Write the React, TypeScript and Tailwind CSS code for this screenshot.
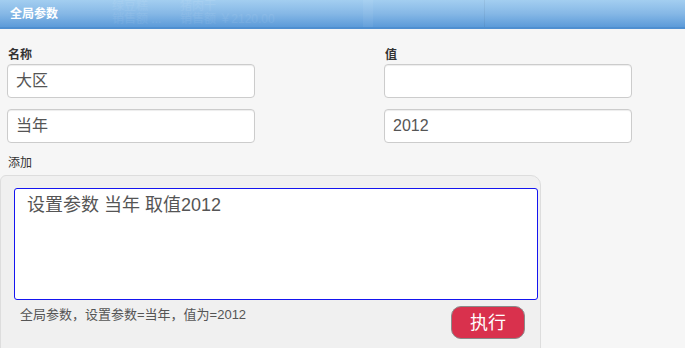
import React from "react";

// ── Field: label + input ─────────────────────────────────────────

function Field({ value }: { value: string }) {
  return (
    <div className="h-[34px] w-[248px] rounded-[4px] border border-[#cccccc] bg-white px-[8px] flex items-center shadow-[inset_0_1px_1px_rgba(0,0,0,0.075)]">
      <span className="text-[16px] text-[#555555] leading-none">{value}</span>
    </div>
  );
}

function Column({ label, values }: { label: string; values: string[] }) {
  return (
    <div className="flex flex-col">
      <div className="h-[17px] text-[12px] font-bold text-[#333333] leading-[17px] pl-[1px]">{label}</div>
      <div className="flex flex-col gap-[11px]">
        {values.map((v, i) => (
          <Field key={i} value={v} />
        ))}
      </div>
    </div>
  );
}

export default function App() {
  return (
    <div
      className="w-[685px] h-[348px] overflow-hidden bg-[#f6f6f6]"
      style={{ fontFamily: '"Liberation Sans", "Noto Sans CJK SC", sans-serif' }}
    >
      {/* ── Header bar ── */}
      <div className="relative h-[29px] border-b-2 border-[#4f8fd0] bg-gradient-to-b from-[#a3cef0] via-[#86b8e6] to-[#5c9bd9] flex items-center px-[10px]">
        {/* faint ghost content behind header */}
        <div className="absolute inset-y-0 left-[363px] w-[10px] bg-white/5" />
        <div className="absolute inset-y-0 left-[484px] w-px bg-black/5" />
        <div className="absolute left-[112px] top-0 w-[62px] overflow-hidden whitespace-nowrap text-[12px] leading-[13px] text-white/[0.07]">
          <div>绿豆糕</div>
          <div>销售额 ...</div>
        </div>
        <div className="absolute left-[180px] top-0 whitespace-nowrap text-[12px] leading-[13px] text-white/[0.07]">
          <div>猪肉干</div>
          <div>销售额 ￥2120.00</div>
        </div>
        <span className="relative text-[12px] font-bold text-white leading-none">全局参数</span>
      </div>

      {/* ── Parameter grid ── */}
      <div className="flex gap-[129px] pl-[7px] pt-[18px]">
        <Column label="名称" values={["大区", "当年"]} />
        <Column label="值" values={["", "2012"]} />
      </div>

      {/* ── Add section ── */}
      <div className="pl-[8px] pt-[12px] pb-[3px] text-[12px] text-[#333333] leading-[17px]">添加</div>

      <div className="w-[541px] h-[180px] rounded-tr-[10px] rounded-tl-[6px] border border-[#dddddd] bg-[#f0f0f0] pt-[12px] pl-[13px] pr-[2px]">
        <div className="h-[112px] w-[524px] rounded-[3px] border border-[#1515f0] bg-white px-[12px] pt-[5px]">
          <span className="text-[18px] text-[#555555] leading-[22px]">设置参数 当年 取值2012</span>
        </div>
        <div className="flex items-start justify-between pr-[13px]">
          <span className="pl-[6px] pt-[7px] text-[13px] text-[#555555] leading-[16px]">
            全局参数，设置参数=当年，值为=2012
          </span>
          <button className="mt-[6px] h-[33px] w-[74px] rounded-[10px] border border-[#8a8a8a] bg-[#d9314d] text-[18px] text-white leading-none">
            执行
          </button>
        </div>
      </div>
    </div>
  );
}
